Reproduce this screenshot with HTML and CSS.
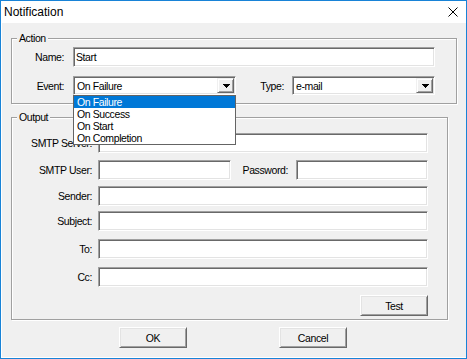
FILE: index.html
```html
<!DOCTYPE html>
<html lang="en">
<head>
  <meta charset="UTF-8" />
  <title>Notification</title>
  <link rel="stylesheet" href="styles.css">
</head>
<body>

  <div class="window">
    <div class="titlebar">
      <span class="title">Notification</span>
      <svg class="close" width="10" height="10" viewBox="0 0 10 10">
        <path d="M0.5 0.5L9.5 9.5M9.5 0.5L0.5 9.5" stroke="#000" stroke-width="1" fill="none"/>
      </svg>
    </div>

    <div class="client">
      <fieldset class="group action">
        <legend>Action</legend>
        <div class="row">
          <label class="lbl">Name:</label>
          <input class="edit name" type="text" value="Start">
        </div>
        <div class="row event-row">
          <label class="lbl">Event:</label>
          <div class="combo event">
            <span class="combo-text">On Failure</span>
            <span class="drop"><svg width="7" height="4" viewBox="0 0 7 4"><path d="M0 0h7v1h-1v1h-1v1h-1v1h-1v-1h-1v-1h-1v-1h-1z" fill="#000"/></svg></span>
            <ul class="droplist">
              <li class="selected">On Failure</li>
              <li>On Success</li>
              <li>On Start</li>
              <li>On Completion</li>
            </ul>
          </div>
          <label class="lbl type-lbl">Type:</label>
          <div class="combo type">
            <span class="combo-text">e-mail</span>
            <span class="drop"><svg width="7" height="4" viewBox="0 0 7 4"><path d="M0 0h7v1h-1v1h-1v1h-1v1h-1v-1h-1v-1h-1v-1h-1z" fill="#000"/></svg></span>
          </div>
        </div>
      </fieldset>

      <fieldset class="group output">
        <legend>Output</legend>
        <div class="row">
          <label class="lbl">SMTP Server:</label>
          <input class="edit" type="text">
        </div>
        <div class="row gap7">
          <label class="lbl">SMTP User:</label>
          <input class="edit user" type="text">
          <label class="lbl pass-lbl">Password:</label>
          <input class="edit" type="password">
        </div>
        <div class="row gap6">
          <label class="lbl">Sender:</label>
          <input class="edit" type="text">
        </div>
        <div class="row gap5">
          <label class="lbl">Subject:</label>
          <input class="edit" type="text">
        </div>
        <div class="row gap8">
          <label class="lbl">To:</label>
          <input class="edit" type="text">
        </div>
        <div class="row gap8">
          <label class="lbl">Cc:</label>
          <input class="edit" type="text">
        </div>
        <div class="test-row">
          <button class="btn">Test</button>
        </div>
      </fieldset>

      <div class="buttons">
        <button class="btn">OK</button>
        <button class="btn">Cancel</button>
      </div>
    </div>
  </div>

</body>
</html>
```

FILE: styles.css
```css
* {
  box-sizing: border-box;
}

body {
  margin: 0;
  background: #fff;
  color: #000;
  font-family: "Liberation Sans", Arial, sans-serif;
  font-size: 10.5px;
  letter-spacing: -0.4px;
}

.window {
  width: 467px;
  height: 359px;
  border: 1px solid #1883d7;
  background: #fff;
  display: flex;
  flex-direction: column;
}

.titlebar {
  height: 22px;
  flex: none;
  display: flex;
  align-items: center;
  justify-content: space-between;
  padding: 0 8px 0 3px;
}

.title {
  font-size: 12px;
  letter-spacing: 0;
}

.close {
  display: block;
}

.client {
  flex: 1;
  background: #f0f0f0;
  margin: 0 0 1px 1px;
  padding: 9px 0 0 9px;
}

/* etched group box */
.group {
  margin: 0;
  min-width: 0;
  border: 1px solid #a0a0a0;
  box-shadow: inset 1px 1px 0 #fff, 1px 1px 0 #fff;
}

.group legend {
  margin-left: 5px;
  padding: 0 2px;
  line-height: 13px;
  background: #f0f0f0;
}

.action {
  width: 446px;
  padding: 2px 21px 8px 0;
}

.output {
  width: 437px;
  margin-top: 7px;
  padding: 9px 19px 3px 0;
}

.row {
  display: flex;
  align-items: center;
}

.lbl {
  flex: none;
  text-align: right;
}

.action .lbl {
  width: 52px;
  margin-right: 9px;
}

.action .type-lbl {
  width: 48px;
  margin-right: 8px;
}

.event-row {
  margin-top: 9px;
}

.output .lbl {
  width: 80px;
  margin-right: 6px;
}

.output .pass-lbl {
  width: 57px;
  margin-right: 8px;
}

.gap5 { margin-top: 5px; }
.gap6 { margin-top: 6px; }
.gap7 { margin-top: 7px; }
.gap8 { margin-top: 8px; }

/* sunken edit box */
.edit {
  flex: 1;
  min-width: 0;
  height: 20px;
  margin: 0;
  padding: 0 2px;
  background: #fff;
  border: 1px solid;
  border-color: #a0a0a0 #fff #fff #a0a0a0;
  box-shadow: inset 1px 1px 0 #696969, inset -1px -1px 0 #e3e3e3;
  font: inherit;
  letter-spacing: inherit;
  color: #000;
  outline: none;
}

.edit.user {
  flex: none;
  width: 133px;
}

.combo {
  position: relative;
  height: 19px;
  display: flex;
  align-items: stretch;
  padding: 1px 1px 1px 3px;
  background: #fff;
  border: 1px solid;
  border-color: #a0a0a0 #fff #fff #a0a0a0;
  box-shadow: inset 1px 1px 0 #696969, inset -1px -1px 0 #e3e3e3;
}

.combo.event {
  flex: none;
  width: 163px;
}

.combo.type {
  flex: 1;
}

.combo-text {
  flex: 1;
  display: flex;
  align-items: center;
}

.drop {
  width: 17px;
  display: flex;
  align-items: center;
  justify-content: center;
  background: #f0f0f0;
  border: 1px solid;
  border-color: #f0f0f0 #696969 #696969 #f0f0f0;
  box-shadow: inset 1px 1px 0 #fff, inset -1px -1px 0 #a0a0a0;
}

.drop svg {
  display: block;
  margin-left: 1px;
}

.droplist {
  position: absolute;
  top: calc(100% + 1px);
  left: -1px;
  width: 163px;
  margin: 0;
  padding: 0;
  list-style: none;
  background: #fff;
  border: 1px solid #646464;
  z-index: 2;
}

.droplist li {
  height: 12px;
  line-height: 12px;
  padding-left: 3px;
}

.droplist li.selected {
  background: #0078d7;
  color: #fff;
}

/* raised push button */
.btn {
  width: 68px;
  height: 21px;
  margin: 0;
  padding: 0;
  background: #f0f0f0;
  border: 1px solid;
  border-color: #fff #696969 #696969 #fff;
  box-shadow: inset 1px 1px 0 #e3e3e3, inset -1px -1px 0 #a0a0a0;
  font: inherit;
  letter-spacing: inherit;
  color: #000;
}

.test-row {
  display: flex;
  justify-content: flex-end;
  margin-top: 8px;
}

.buttons {
  display: flex;
  gap: 92px;
  margin: 7px 0 0 108px;
}
```
